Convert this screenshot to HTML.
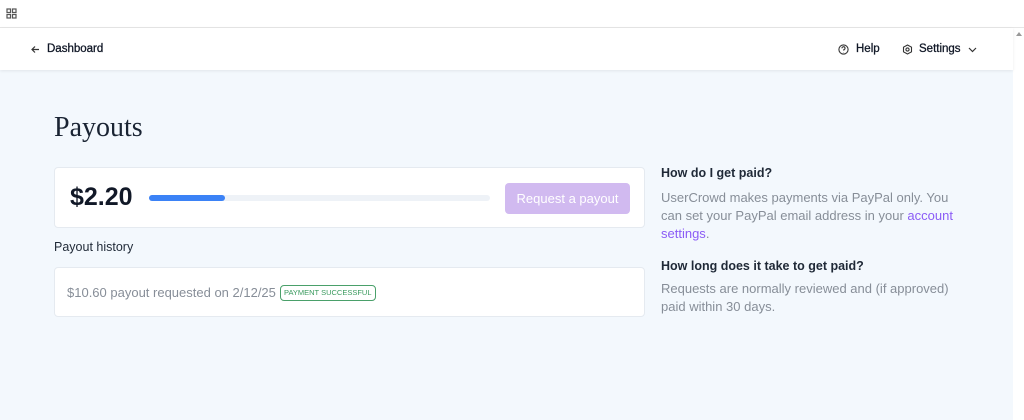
<!DOCTYPE html>
<html><head><meta charset="utf-8"><style>
*{box-sizing:border-box;margin:0;padding:0}
body{width:1024px;height:420px;overflow:hidden;background:#fff;font-family:"Liberation Sans",sans-serif;position:relative}
.top{position:absolute;left:0;top:0;width:1024px;height:28px;background:#fff;border-bottom:1px solid #e6e6e6}
.main{position:absolute;left:0;top:28px;width:1013px;height:392px;background:#f3f8fd}
.hdr{position:absolute;left:0;top:0;width:1013px;height:42px;background:#fff;box-shadow:0 1px 3px rgba(0,0,0,.08);font-size:11.5px;color:#111827;-webkit-text-stroke:0.3px #111827}
.sb{position:absolute;left:1013px;top:28px;width:11px;height:392px;background:#fff}
.t{position:absolute}
.card{position:absolute;background:#fff;border:1px solid #e5eaf0;border-radius:4px}
.gray{color:#878e98}
</style></head><body>
<div class="top"><svg style="position:absolute;left:6px;top:8px" width="11" height="11" viewBox="0 0 11 11" fill="none" stroke="#555" stroke-width="1.2"><rect x="1" y="1" width="3.5" height="3.5"/><rect x="6.5" y="1" width="3.5" height="3.5"/><rect x="1" y="6.5" width="3.5" height="3.5"/><rect x="6.5" y="6.5" width="3.5" height="3.5"/></svg></div>
<div class="sb"><div style="position:absolute;left:3px;top:4px;border-left:3px solid transparent;border-right:3px solid transparent;border-bottom:4px solid #999"></div></div>
<div class="main">
<div class="hdr">
<svg class="t" style="left:31px;top:17px" width="9" height="9" viewBox="0 0 9 9" fill="none" stroke="#333" stroke-width="1.2"><path d="M8 4.5H1M4 1.5L1 4.5L4 7.5"/></svg>
<span class="t" style="left:47px;top:15px">Dashboard</span>
<svg class="t" style="left:838px;top:16px" width="11" height="11" viewBox="0 0 11 11" fill="none" stroke="#333" stroke-width="1.1"><circle cx="5.5" cy="5.5" r="4.6"/><path d="M4 4.3a1.5 1.5 0 1 1 1.8 1.4v.9M5.5 8v.3"/></svg>
<span class="t" style="left:856px;top:15px">Help</span>
<svg class="t" style="left:902px;top:16px" width="11" height="11" viewBox="0 0 11 11" fill="none" stroke="#333" stroke-width="1.1"><path d="M5.5 1l4 2.2v4.6l-4 2.2-4-2.2V3.2z"/><circle cx="5.5" cy="5.5" r="1.6"/></svg>
<span class="t" style="left:919px;top:15px">Settings</span>
<svg class="t" style="left:968px;top:19px" width="9" height="6" viewBox="0 0 9 6" fill="none" stroke="#333" stroke-width="1.2"><path d="M1 1l3.5 3.5L8 1"/></svg>
</div>
<div class="t" style="left:54px;top:84px;font-family:'Liberation Serif',serif;font-size:28px;color:#1a2433">Payouts</div>
<div class="card" style="left:54px;top:139px;width:591px;height:61px">
<div class="t" style="left:15px;top:15px;font-size:25px;font-weight:bold;color:#111827">$2.20</div>
<div class="t" style="left:94px;top:27px;width:341px;height:6px;background:#eef2f7;border-radius:3px"><div style="width:76px;height:6px;background:#3b82f6;border-radius:3px"></div></div>
<div class="t" style="left:450px;top:15px;width:125px;height:31px;background:#d1baf0;border-radius:4px;color:#fff;font-size:13px;text-align:center;line-height:31px">Request a payout</div>
</div>
<div class="t" style="left:54px;top:212px;font-size:12.5px;color:#1f2937">Payout history</div>
<div class="card" style="left:54px;top:239px;width:591px;height:50px">
<span class="t gray" style="left:12px;top:17px;font-size:13px">$10.60 payout requested on 2/12/25</span>
<span class="t" style="left:225px;top:17px;border:1px solid #4aa06a;border-radius:4px;color:#3a9a5e;font-size:7.5px;padding:2px 3px;line-height:10px">PAYMENT SUCCESSFUL</span>
</div>
<div class="t" style="left:661px;top:138px;font-size:12.5px;font-weight:bold;color:#1f2937">How do I get paid?</div>
<div class="t gray" style="left:661px;top:161px;width:292px;font-size:13px;line-height:18px">UserCrowd makes payments via PayPal only. You can set your PayPal email address in your <span style="color:#8b5cf6">account settings</span>.</div>
<div class="t" style="left:661px;top:231px;font-size:12.5px;font-weight:bold;color:#1f2937">How long does it take to get paid?</div>
<div class="t gray" style="left:661px;top:252px;width:292px;font-size:13px;line-height:18px">Requests are normally reviewed and (if approved) paid within 30 days.</div>
</div>
</body></html>
